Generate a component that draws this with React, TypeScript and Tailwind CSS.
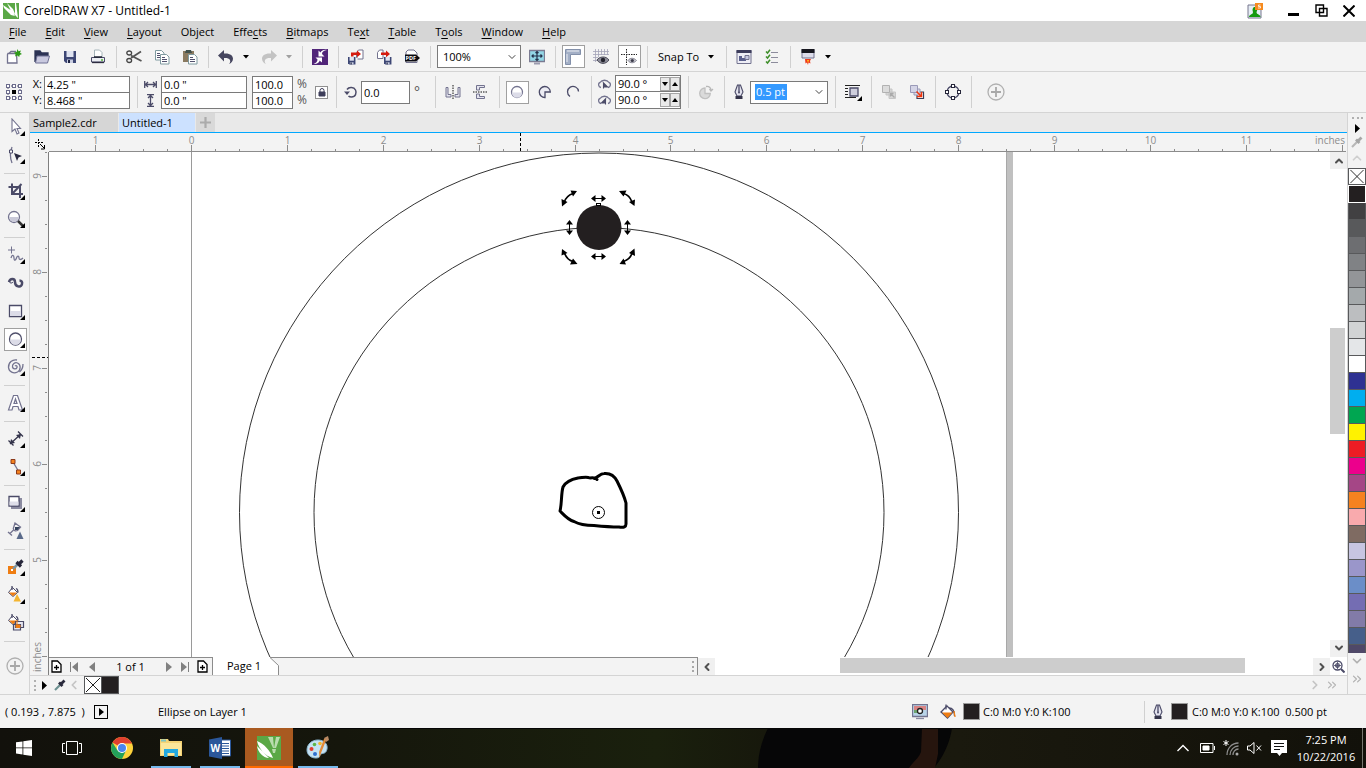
import React from 'react';
import { ChevronDown, ChevronLeft, ChevronRight, ChevronUp, ChevronsRight } from 'lucide-react';
import { clsx } from 'clsx';

type IconProps = { children: React.ReactNode; size?: string; box?: string };

const INK = '#4b4b68';
const SOFT = '#73738f';

const Icon = ({ children, size = 'w-4 h-4', box = '0 0 16 16' }: IconProps) => (
  <svg viewBox={box} className={clsx(size, 'shrink-0')} fill="none" stroke={INK} strokeWidth="1.3" aria-hidden="true">
    {children}
  </svg>
);

const Tool = ({ label, active, children }: { label: string; active?: boolean; children: React.ReactNode }) => (
  <div className="w-7 h-7 shrink-0 flex items-center justify-center">
    <button
      aria-label={label}
      className={clsx('w-[23px] h-[23px] flex items-center justify-center', active && 'bg-white border border-[#a0a0a0]')}
    >
      {children}
    </button>
  </div>
);

const Sep = ({ tall }: { tall?: boolean }) => (
  <div className={clsx('w-2 shrink-0 flex justify-center', tall ? 'h-8' : 'h-[22px]')}>
    <div className="w-px h-full bg-[#d0d0d0]" />
  </div>
);

const Caret = ({ label, muted }: { label: string; muted?: boolean }) => (
  <button aria-label={label} className="w-[15px] h-6 shrink-0 flex items-center pl-[3px]">
    <svg viewBox="0 0 6 4" className="w-[6px] h-1" fill={muted ? '#a0a0a0' : '#000'}><path d="M0 0h6L3 3.6z" /></svg>
  </button>
);

/* ---------- standard toolbar icons ---------- */

const Disk = ({ x = 0, y = 0, s = 1 }) => (
  <g transform={`translate(${x} ${y}) scale(${s})`} stroke="none">
    <path d="M0 0h12v12H2l-2-2z" fill="#3c4674" />
    <path d="M2.5 0h7v6h-7z" fill="#dfe3f0" />
    <path d="M3 8.5h6V12H3z" fill="#c9cde0" />
    <path d="M4 9h2v3H4z" fill="#1f2544" />
  </g>
);

const Sheet = ({ x, y }: { x: number; y: number }) => (
  <g transform={`translate(${x} ${y})`} strokeWidth="1">
    <path d="M.5.5h6l2.5 2.5v7H.5z" fill="#fff" stroke="#7f9aa0" />
    <path d="M2 3.5h3M2 5.5h5M2 7.5h5" stroke="#52526e" />
  </g>
);

const FileIcons = () => (
  <>
    <Tool label="New">
      <Icon><path d="M2 4.5h8.5l.5 9.5H1.500V5.500z" fill="#fff" stroke={SOFT} /><path d="M3 4.500L5 2.500h5" stroke={SOFT} /><path d="M11.500 0l1 2.300L15 1.500l-1 2.300 2 1.200-2.300 1-.5 2-1.700-1.600L9.200 7.500l.3-2.500L8 3.500l2.600-.5z" fill="#2f9a1a" stroke="none" /></Icon>
    </Tool>
    <Tool label="Open">
      <Icon><path d="M1 13V2h5l1.500 2H14v3" fill="#2c3354" stroke="#2c3354" /><path d="M3 7h12.500l-2 7H1.500z" fill="#c9c9df" stroke="#6f7094" strokeWidth="1" /></Icon>
    </Tool>
    <Tool label="Save"><Icon><Disk x={2} y={2} /></Icon></Tool>
    <Tool label="Print">
      <Icon><path d="M4.500 8V1h5L12 3.500V8" fill="#fff" stroke="#a6b5ba" strokeWidth="1" /><path d="M1.500 8.500h13V13h-13z" fill="#eceef3" stroke={INK} strokeWidth="1" /><path d="M2 13.500h12" stroke="#2c2c40" /><path d="M4 8h8" stroke="#1f2433" strokeWidth="1.500" /><path d="M11 11h2" stroke="#55b53a" /></Icon>
    </Tool>
    <Sep />
    <Tool label="Cut">
      <Icon><path d="M5 9L15 2.500M5 6.500L15.500 12" stroke="#555" strokeWidth="1.800" /><ellipse cx="3.200" cy="4" rx="2.400" ry="2" stroke="#444" /><ellipse cx="3.200" cy="11.500" rx="2.400" ry="2" stroke="#444" /></Icon>
    </Tool>
    <Tool label="Copy"><Icon><Sheet x={1} y={1} /><Sheet x={6} y={5} /></Icon></Tool>
    <Tool label="Paste">
      <Icon><path d="M1 2h11v11H1z" fill="#8a7a60" stroke="none" /><path d="M4 1h5l1 3H3z" fill="#40514d" stroke="none" /><Sheet x={6} y={5} /></Icon>
    </Tool>
    <Sep />
    <Tool label="Undo">
      <Icon><path d="M0 6.500L6 1v3.500c6-.5 9 2 9 5.200 0 2.500-1.800 4.300-4 5.300 1.300-1.500 1.600-3 .8-4.300-.9-1.500-3-1.900-5.800-1.700v3.500z" fill="#46465f" stroke="none" /></Icon>
    </Tool>
    <Caret label="Undo history" />
    <Tool label="Redo">
      <Icon><path d="M16 6.500L10 1v3.500C4 4 1 6.500 1 9.700c0 2.500 1.800 4.300 4 5.300-1.300-1.500-1.600-3-.8-4.300.9-1.500 3-1.900 5.800-1.700v3.500z" fill="#c3c3c3" stroke="none" /></Icon>
    </Tool>
    <Caret label="Redo history" muted />
    <Sep />
    <Tool label="Search content">
      <Icon>
        <path d="M0 0h16v16H0z" fill="#512579" stroke="none" />
        <path d="M15 1c-3.500.5-5 2-5 4l2.500 2.500h-6v-6l2 2C9.500 1.500 12 .5 15 1zM1.500 15C6 15 7.500 13 7.500 11.500L10 13.500V8.500H3.500l2 2c0 2-1.500 3.500-4 4.500z" fill="#fff" stroke="none" />
      </Icon>
    </Tool>
    <Sep />
    <Tool label="Import">
      <Icon><Disk x={0} y={8} s={0.62} /><path d="M9.500 8.500h-1V3.500l2-2.500H15v9H9.500" fill="#fff" stroke={SOFT} strokeWidth="1" /><path d="M3 3.500h6V1.500L13 5 9 8.200V6H5.500v1.500H3z" fill="#d51b10" stroke="none" /></Icon>
    </Tool>
    <Tool label="Export">
      <Icon><Disk x={8} y={8} s={0.62} /><path d="M1.500 9.500v-6l2-2.500H7v8.500z" fill="#fff" stroke={SOFT} strokeWidth="1" /><path d="M5 3.500h5V1.500L14 5l-4 3.200V6H5z" fill="#d51b10" stroke="none" /></Icon>
    </Tool>
    <Tool label="Publish to PDF">
      <Icon><path d="M2 13.500V3l2-2h6l3 3v9.500z" fill="#fff" stroke={SOFT} strokeWidth="1" /><path d="M1 5.500h11L16 9l-4 3.500H1z" fill="#0a0a12" stroke="none" /><text x="1.500" y="11.200" fontSize="5.500" fontWeight="700" fill="#fff" stroke="none">PDF</text></Icon>
    </Tool>
    <Sep />
  </>
);

const StandardBar = () => (
  <div className="h-[30px] shrink-0 flex items-center border-b border-[#d4d4d4]">
    <FileIcons />
    <div className="relative ml-[3px] mr-[2px] w-[84px] h-[23px] shrink-0">
      <select aria-label="Zoom level" className="appearance-none w-full h-full bg-white border border-[#7a7a7a] pl-[5px] rounded-none">
        <option>100%</option>
      </select>
      <ChevronDown className="absolute right-[3px] top-[6px] w-3 h-3 text-[#444] pointer-events-none" />
    </div>
    <Tool label="Full-screen preview">
      <Icon><path d="M.5 1.500h15v11H.5z" fill="#92d6e6" stroke="#7b7b92" /><path d="M5 14.500h6" stroke="#9a9aae" strokeWidth="2" /><path d="M8 2.500v9M3 7h10M6.500 4L8 2.500 9.500 4M6.500 10L8 11.500 9.500 10M4.500 5.500L3 7l1.500 1.500M11.500 5.500L13 7l-1.500 1.500" stroke="#24304a" strokeWidth="1.200" /></Icon>
    </Tool>
    <Sep />
    <Tool label="Show rulers" active>
      <Icon><path d="M.5.5h15v5h-10v10h-5z" fill="#a3afc6" stroke="#8390aa" strokeWidth="1" /><path d="M3 1v2M5 1v2M7 1v2M9 1v2M11 1v2M13 1v2M1 6h2M1 8h2M1 10h2M1 12h2" stroke="#fff" strokeWidth=".8" /></Icon>
    </Tool>
    <Tool label="Show grid">
      <Icon><path d="M2.500 0v13M5.500 0v8M8.500 0v6M11.500 0v6M14.500 0v6M0 2.500h16M0 5.500h16M0 8.500h5M0 11.500h5" stroke="#a3a3b8" strokeWidth=".8" /><path d="M4 11c2-3.500 9-4.500 12 0-3 4.500-9 4.500-12 0z" fill="#8e8e9a" stroke="#4a4a58" strokeWidth="1" /><circle cx="10" cy="11" r="2.200" fill="#23232e" stroke="none" /></Icon>
    </Tool>
    <Tool label="Show guidelines" active>
      <Icon><path d="M5.500 0v16M0 5.500h16" stroke="#222" strokeWidth="1" strokeDasharray="1.500 1" /><path d="M7 11.500c2-3 6-3 8.500 0-2.500 3-6.500 3-8.500 0z" fill="#c4c4cc" stroke="#8b8b98" strokeWidth="1" /><circle cx="11.300" cy="11.500" r="1.600" fill="#3a3a48" stroke="none" /></Icon>
    </Tool>
    <Sep />
    <button className="w-[71px] h-6 shrink-0 flex items-center gap-[9px] pl-[7px] whitespace-nowrap">
      Snap To
      <svg viewBox="0 0 6 4" className="w-[6px] h-1" fill="#000"><path d="M0 0h6L3 3.600z" /></svg>
    </button>
    <Sep />
    <Tool label="Options">
      <Icon><path d="M1 1.500h14v13H1z" fill="#eeeef6" stroke={SOFT} strokeWidth="1" /><path d="M.5 1h15v3H.5z" fill="#3d3d5c" stroke="none" /><path d="M3 7h3v5H3zM6 9h4v3H6z" fill="#5b608d" stroke="none" /><path d="M9 6.500h4v4H9z" fill="#c7c9e2" stroke={SOFT} strokeWidth="1" /></Icon>
    </Tool>
    <Tool label="Customize">
      <Icon><path d="M7 3.500h7M7 8.500h7M7 13.500h7" stroke="#8c8c9c" strokeWidth="1" /><path d="M2 2.500l1.500 1.500L6 .8M2 7.500L3.500 9 6 5.800M2 12.500L3.500 14 6 10.800" stroke="#3f8f2a" strokeWidth="1.500" /></Icon>
    </Tool>
    <Sep />
    <Tool label="Application launcher">
      <Icon><path d="M2 .5h12v8.500H2z" fill="#dcdcea" stroke={SOFT} strokeWidth="1" /><path d="M1.500 0h13v4h-13z" fill="#17171f" stroke="none" /><path d="M5 10h6l-1 2 .5 2.500-2-1L8 16l-1-2.500-1.500 1z" fill="#f0381a" stroke="none" /><path d="M7 11h2l-1 3z" fill="#ffc21a" stroke="none" /></Icon>
    </Tool>
    <Caret label="Launcher menu" />
  </div>
);

/* ---------- property bar ---------- */

type FieldProps = { id: string; value: string; label: string; width: string; second?: boolean };

const Field = ({ id, value, label, width, second }: FieldProps) => (
  <input
    id={id}
    aria-label={label}
    defaultValue={value}
    className={clsx('h-[17px] bg-white border border-[#7a7a7a] px-[2px] rounded-none', width, second && '-mt-px')}
  />
);

const Spin = ({ id, label }: { id: string; label: string }) => (
  <div className="flex items-center h-4 bg-white">
    <input id={id} aria-label={label} defaultValue="90.0 °" className="w-11 px-[2px] bg-transparent" />
    {['Decrease', 'Increase'].map((name, i) => (
      <button key={name} aria-label={`${name} ${label}`} className="w-[10px] h-[14px] bg-[#e9e9e9] border border-[#a6a6a6] flex items-center justify-center">
        <svg viewBox="0 0 6 4" className={clsx('w-[6px] h-1 shrink-0', i === 1 && 'rotate-180')}><path d="M0 0h6L3 4z" /></svg>
      </button>
    ))}
  </div>
);

const PlusCircle = () => (
  <Icon size="w-[18px] h-[18px]" box="0 0 18 18"><circle cx="9" cy="9" r="8" stroke="#b0b0b0" /><path d="M9 4v10M4 9h10" stroke="#a8a8a8" strokeWidth="1.800" /></Icon>
);

const Nib = () => (
  <Icon><path d="M6.500 1h3l2.500 7-2 4H6L4 8z" fill="#e3e3ee" stroke={INK} strokeWidth="1.100" /><path d="M8 1v7" stroke={INK} /><circle cx="8" cy="8.500" r="1" fill={INK} stroke="none" /><path d="M4.500 12h7v3h-7z" fill="#34344a" stroke="none" /></Icon>
);

const PropertyBar = () => (
  <div className="h-[41px] shrink-0 flex items-center border-b border-[#d4d4d4]">
    <Tool label="Object origin">
      <Icon>
        <path d="M2 2h12v12H2z" stroke="#55556e" strokeWidth="1" strokeDasharray="2 1" />
        {[2, 8, 14].map((x) => [2, 8, 14].map((y) => (
          <rect key={`${x}-${y}`} x={x - 1.5} y={y - 1.5} width="3" height="3" fill={x === 8 && y === 8 ? '#000' : '#fff'} stroke={x === 8 && y === 8 ? '#000' : '#6b6b8c'} strokeWidth="1" />
        )))}
      </Icon>
    </Tool>
    <div className="w-4 flex flex-col items-end pr-[2px] leading-4">
      <label htmlFor="pos-x">X:</label>
      <label htmlFor="pos-y">Y:</label>
    </div>
    <div className="flex flex-col mr-[3px]">
      <Field id="pos-x" label="X position" value={'4.25 "'} width="w-[86px]" />
      <Field id="pos-y" label="Y position" value={'8.468 "'} width="w-[86px]" second />
    </div>
    <Sep tall />
    <div className="w-5 flex flex-col items-center gap-[3px] pr-[2px]">
      <Icon size="w-[13px] h-[13px]" box="0 0 13 13"><path d="M.7 3v7M12.300 3v7M1.500 6.500h10M4 4L1.500 6.500 4 9M9 4l2.500 2.500L9 9" /></Icon>
      <Icon size="w-[13px] h-[13px]" box="0 0 13 13"><path d="M3 .7h7M3 12.300h7M6.500 1.500v10M4 4l2.500-2.500L9 4M4 9l2.500 2.500L9 9" /></Icon>
    </div>
    <div className="flex flex-col">
      <Field id="size-w" label="Object width" value={'0.0 "'} width="w-[86px]" />
      <Field id="size-h" label="Object height" value={'0.0 "'} width="w-[86px]" second />
    </div>
    <div className="flex flex-col ml-[5px]">
      <Field id="scale-x" label="Horizontal scale" value="100.0" width="w-[41px]" />
      <Field id="scale-y" label="Vertical scale" value="100.0" width="w-[41px]" second />
    </div>
    <div className="w-[18px] pl-1 text-xs leading-4 text-[#555]">
      <div>%</div>
      <div>%</div>
    </div>
    <button aria-label="Lock ratio" className="mx-1 w-[13px] h-[13px] bg-white border border-[#909090] flex items-center justify-center">
      <svg viewBox="0 0 8 9" className="w-2 h-[9px]" fill="none" stroke="#3e3e5a"><path d="M2 4V2.500a2 2 0 014 0V4" /><path d="M1 4h6v4H1z" fill="#3e3e5a" /></svg>
    </button>
    <Sep tall />
    <label htmlFor="angle" className="w-[21px] flex justify-center">
      <Icon size="w-[14px] h-[14px]" box="0 0 14 14"><path d="M3 4.500c2-3 7-2.500 8.500.5s0 7-4 7c-1.500 0-2.500-.5-3-1" strokeWidth="1.500" /><path d="M0 6.500h6L3 10z" fill={INK} stroke="none" /></Icon>
    </label>
    <input id="angle" defaultValue="0.0" className="w-[49px] h-[23px] px-[2px] bg-white border border-[#7a7a7a]" />
    <span className="w-[21px] pl-1 text-sm text-[#555]">°</span>
    <Sep tall />
    <Tool label="Mirror horizontally">
      <Icon><path d="M1 3.500h2v7h3v2.500H1zM15 3.500h-2v7h-3v2.500h5z" stroke={SOFT} fill="#e4e4ee" strokeWidth="1" /><path d="M8 1v14" stroke="#111" strokeWidth="1" strokeDasharray="1.500 1" /></Icon>
    </Tool>
    <Tool label="Mirror vertically">
      <Icon><path d="M3.500 1.500h8v2h-5v2.500h-3zM3.500 14.500h8v-2h-5V10h-3z" stroke={SOFT} fill="#e4e4ee" strokeWidth="1" /><path d="M0 8h15" stroke="#111" strokeWidth="1" strokeDasharray="1.500 1" /></Icon>
    </Tool>
    <Sep tall />
    <Tool label="Ellipse" active><Icon><circle cx="8" cy="8" r="5.500" fill="#fff" stroke={SOFT} /><path d="M2.800 8.500h10.400a5.200 5.200 0 01-10.400 0z" fill="#dcdce8" stroke="none" /></Icon></Tool>
    <Tool label="Pie"><Icon><path d="M8 8h5.300A5.500 5.500 0 108 13.500z" fill="#ececf3" stroke={INK} /></Icon></Tool>
    <Tool label="Arc"><Icon><path d="M5 12.500a5.500 5.500 0 118.500-5" stroke={INK} /></Icon></Tool>
    <Sep tall />
    <div className="w-5 flex flex-col items-center gap-[3px] pr-px">
      <Icon size="w-[13px] h-[13px]" box="0 0 13 13"><path d="M3 9.500C0 9 0 5 2 4.500c2-3 7-3 9 0 2 .5 2 4.500-1 5" stroke={SOFT} /><path d="M5.500 4.500v6M5.500 5l4 4h-3z" strokeWidth="1.100" fill={INK} /></Icon>
      <Icon size="w-[13px] h-[13px]" box="0 0 13 13"><path d="M3 9.500C0 9 0 5 2 4.500c2-3 7-3 9 0 2 .5 2 4.500-1 5" stroke={SOFT} /><path d="M7.500 4.500v6M7.500 5l-4 4h3z" strokeWidth="1.100" fill={INK} /></Icon>
    </div>
    <div className="flex flex-col border border-[#7a7a7a] divide-y divide-[#7a7a7a] mr-[3px]">
      <Spin id="start-angle" label="Starting angle" />
      <Spin id="end-angle" label="Ending angle" />
    </div>
    <Sep tall />
    <Tool label="Change direction"><Icon><path d="M7 4a5.300 5.300 0 105.300 5.500H7z" fill="#dadada" stroke="#c0c0c0" /><path d="M8 2.500c3-.5 5 1 5 4M11.500 5l1.500 2 2-2" stroke="#b8b8b8" /></Icon></Tool>
    <Sep tall />
    <div className="w-5 flex justify-center pl-px"><Nib /></div>
    <div className="ml-[2px] mr-[3px] w-[78px] h-[23px] bg-white border border-[#7a7a7a] flex items-center justify-between pl-1">
      <input aria-label="Outline width" defaultValue="0.5 pt" className="w-8 h-4 bg-[#3399ff] text-white pl-px" />
      <button aria-label="Outline width list" className="pr-[2px]"><ChevronDown className="w-3 h-3 text-[#444]" /></button>
    </div>
    <Sep tall />
    <Tool label="Wrap text">
      <Icon size="w-[18px] h-[18px]" box="0 0 18 18"><path d="M1 2.500h15M1 5.500h3M1 8.500h3M1 11.500h3M1 14.500h11" stroke="#222" strokeWidth="1" /><path d="M6 5h8v8H6z" fill="#cfcfdd" stroke={INK} /><path d="M18 13v5h-5z" fill="#000" stroke="none" /></Icon>
    </Tool>
    <Sep tall />
    <Tool label="To front"><Icon><path d="M8 8h6.500v6.500H8zM5 5h6v6H5z" fill="#d6d6d6" stroke="#c6c6c6" strokeWidth="1" /><path d="M1.500 1.500h7v7h-7z" fill="#dcdcdc" stroke="#b2b2b2" strokeWidth="1" /><path d="M9.500 12.500v-3h3M9.500 9.500l4 4" stroke="#aaa" /></Icon></Tool>
    <Tool label="To back"><Icon><path d="M8 8h6.500v6.500H8z" fill="#fff" stroke="#3b3b55" strokeWidth="1.200" /><path d="M5 5h6v6H5z" fill="#dcdcea" stroke="#9a9ab8" strokeWidth="1" /><path d="M1.500 1.500h7v7h-7z" fill="#d4d4e6" stroke="#9a9ab8" strokeWidth="1" /><path d="M7.500 7.500l4.500 4.500M12.500 8v4.500H8" stroke="#f0340c" strokeWidth="1.500" /></Icon></Tool>
    <Sep tall />
    <Tool label="Convert to curves">
      <Icon><circle cx="8" cy="8" r="6" stroke={INK} />{[[8, 2], [14, 8], [8, 14], [2, 8]].map(([x, y]) => <rect key={`${x}${y}`} x={x - 1.5} y={y - 1.5} width="3" height="3" fill="#fff" stroke="#26263a" strokeWidth="1" />)}</Icon>
    </Tool>
    <Sep tall />
    <button aria-label="Quick customize" className="ml-3"><PlusCircle /></button>
  </div>
);

/* ---------- toolbox ---------- */

const Flyout = () => <path d="M18 13v5h-5z" fill="#000" stroke="none" />;

const HSep = () => <div className="h-2 shrink-0 flex items-center px-1"><div className="h-px w-full bg-[#d0d0d0]" /></div>;

const ToolBtn = ({ label, active, fly = true, children }: { label: string; active?: boolean; fly?: boolean; children: React.ReactNode }) => (
  <div className="h-7 shrink-0 flex items-center pl-[4px]">
    <button aria-label={label} className={clsx('w-[23px] h-[23px] flex items-center justify-center', active && 'bg-white border border-[#a0a0a0]')}>
      <svg viewBox="0 0 18 18" className="w-[18px] h-[18px] shrink-0" fill="none" stroke={INK} strokeWidth="1.300">
        {children}
        {fly && <Flyout />}
      </svg>
    </button>
  </div>
);

const Bucket = () => (
  <>
    <path d="M5.500 1.500l5 5-4.500 4-4.500-4z" fill="#fff" stroke={INK} strokeWidth="1" />
    <path d="M2 6.500h8l-4 3.800z" fill="#ef7d12" stroke="none" />
    <path d="M5 0v4M9 2.500c1.500.5 2 2 2 4" stroke={INK} strokeWidth="1.300" />
  </>
);

const Toolbox = () => (
  <nav aria-label="Toolbox" className="w-[30px] shrink-0 border-r border-[#d4d4d4] flex flex-col">
    <ToolBtn label="Pick"><path d="M5 1v12.500l3-2.500 2 5 2-1-2-4.500h3.500z" fill="#fff" stroke={SOFT} strokeWidth="1.100" /></ToolBtn>
    <ToolBtn label="Shape"><path d="M5 1C3 6 3 12 5 17" stroke={SOFT} /><path d="M2.500 4h3v3h-3z" fill="#fff" strokeWidth="1" /><path d="M7 7l8 3-3.500 1.500L10 15z" fill="#2a2a40" stroke="none" /></ToolBtn>
    <HSep />
    <ToolBtn label="Crop"><path d="M5 1.500V12h11M1.500 5H13v11M14.500 2L5 12" strokeWidth="2" /></ToolBtn>
    <ToolBtn label="Zoom"><circle cx="7" cy="7" r="5.500" fill="#fff" stroke={SOFT} /><path d="M2.200 7h9.600a4.800 4.800 0 01-9.600 0z" fill="#c9c9d8" stroke="none" /><path d="M11 11l5 5" strokeWidth="2.500" stroke="#333" /></ToolBtn>
    <HSep />
    <ToolBtn label="Freehand"><path d="M4.500.5v7M1 4h7" strokeWidth="1" stroke={SOFT} /><path d="M4 12c1-4 3-3 3 0s1.500 3 2.500 0 2.500-2 2.500 0 2 2 4 0" stroke={SOFT} /></ToolBtn>
    <ToolBtn label="Artistic media" fly={false}><path d="M2 8c1-4 6-4 6 0 0 5 6 6 7 2 .5-2-.5-3.500-2.500-3.500" strokeWidth="2.500" /><path d="M2 7.500c1 2 3 2 4 .5" strokeWidth="1" /></ToolBtn>
    <ToolBtn label="Rectangle"><path d="M2.500 3.500h12v11h-12z" fill="#fff" /><path d="M3 9h11v5H3z" fill="#dcdce8" stroke="none" /></ToolBtn>
    <ToolBtn label="Ellipse" active><circle cx="8.500" cy="9" r="6" fill="#fff" stroke="#50506c" /><path d="M3 9.500h11a5.500 5.500 0 01-11 0z" fill="#dcdce8" stroke="none" /></ToolBtn>
    <ToolBtn label="Spiral"><path d="M8 8c1-1 2.500 0 2 1.500-.6 2-4 2-4.500-.5C5 6 8 4 10.500 5c3.500 1.500 3.500 7 0 9-4 2-8.500 0-9-4.500C1.200 4.500 5.500 1 10 2M16 6c0 4-1 6-3.500 8" stroke={SOFT} /></ToolBtn>
    <HSep />
    <ToolBtn label="Text"><path d="M1.500 16L6.500 1.500h4l5 14.500h-3.500l-1-3.500H6L5 16zM7 9.500h3L8.500 5z" fill="#fff" stroke={SOFT} strokeWidth="1.200" /></ToolBtn>
    <HSep />
    <ToolBtn label="Dimension"><path d="M3 14L14 4M1.500 10.500l5 5M11 1.500l5 5" stroke="#33334a" /><path d="M3 14l1-5 4 4zM14 4l-5 1 4 4z" fill="#33334a" stroke="none" /></ToolBtn>
    <ToolBtn label="Connector"><path d="M6 4l6 10" stroke={SOFT} /><path d="M4 1.500h4v4H4zM9.500 12h4v4h-4z" fill="#f5821f" stroke="#8c3b1a" strokeWidth="1" /></ToolBtn>
    <HSep />
    <ToolBtn label="Drop shadow"><path d="M4 4h11v11H4z" fill="#8b8ba0" stroke="none" /><path d="M2 2.500h10v9.500H2z" fill="#fff" /><path d="M2.500 7.500h9v4h-9z" fill="#dedee9" stroke="none" /></ToolBtn>
    <ToolBtn label="Transparency" fly={false}><path d="M8 1l5.500 4-3 3.500c-2 1-4 0-4.200-2zM6.500 8L3 11.500M1 10l4 3.500" stroke={SOFT} /><path d="M8 5h5l-2.500 3H8z" fill="#33415c" stroke="none" /><path d="M13 9.500l3.500 7.500h-7z" fill="#5a6a8a" stroke="none" /></ToolBtn>
    <HSep />
    <ToolBtn label="Eyedropper"><path d="M1 8h8v8H1z" fill="#ef7d12" stroke="none" /><path d="M4 11h2v2H4z" fill="#fff" stroke="none" /><path d="M6 11l6-6" stroke="#7e94a0" strokeWidth="2.500" /><path d="M9.500 4l4.500 4.500M12 6l3.500-3.500" stroke="#26263a" strokeWidth="3.200" /></ToolBtn>
    <ToolBtn label="Interactive fill"><Bucket /><path d="M10 8l4 7.500H6.500z" fill="#f4b531" stroke="none" /></ToolBtn>
    <ToolBtn label="Smart fill" fly={false}><Bucket /><path d="M8.500 7.500h8v6h-8zM6.500 10.500h7v5.500h-7z" fill="#e8e8f2" strokeWidth="1.200" /><path d="M9 11h4v2.500H9zM10 6v5" fill="#ef7d12" stroke="#ef7d12" strokeWidth="1" /></ToolBtn>
    <HSep />
    <button aria-label="Customize toolbox" className="mt-3 flex justify-center pl-px"><PlusCircle /></button>
  </nav>
);

/* ---------- document window ---------- */

const INCH = 96;
const QUARTER = 24;

const HRuler = () => {
  const origin = 142.5;
  const ticks = Array.from({ length: 80 }, (_, i) => i - 5);
  return (
    <svg className="flex-1 min-w-0 h-[18px] text-[10px]" fill="#8c8c8c">
      {ticks.map((t) => (
        <rect key={t} x={origin - 0.5 + t * QUARTER - Math.round(t / 40)} y={t % 4 ? 16 : 12} width="1" height={t % 4 ? 2 : 6} />
      ))}
      {Array.from({ length: 13 }, (_, i) => i - 1).map((n) => (
        n < 12 && <text key={n} x={origin + n * INCH - Math.round(n / 10)} y="11" textAnchor="middle">{Math.abs(n)}</text>
      ))}
      <text x="1266" y="11">inches</text>
      <path d="M471.500 0v18" stroke="#000" strokeDasharray="3 2" />
    </svg>
  );
};

const VRuler = () => (
  <svg className="w-[19px] shrink-0 text-[10px]" fill="#8c8c8c">
    {Array.from({ length: 22 }, (_, i) => i).map((i) => (
      <rect key={i} x={i % 4 === 1 ? 12 : 15} y={i * QUARTER} width={i % 4 === 1 ? 5 : 2} height="1" />
    ))}
    {[9, 8, 7, 6, 5].map((n, i) => (
      <text key={n} transform={`translate(11 ${24 + i * INCH}) rotate(-90)`} textAnchor="middle">{n}</text>
    ))}
    <text transform="translate(11 520) rotate(-90)">inches</text>
    <path d="M2 205.500h16" stroke="#000" strokeDasharray="3 2" />
    <path d="M18.500 0v523" stroke="#7f7f7f" />
  </svg>
);

// double headed arrow lying on the x axis
const Stretch = ({ x, y, turn = 0 }: { x: number; y: number; turn?: number }) => (
  <path transform={`translate(${x} ${y}) rotate(${turn})`} d="M-7.500 0l4.500-3.500v3h6v-3L7.500 0 3 3.500v-3h-6v3z" />
);

const Rotate = ({ x, y, turn }: { x: number; y: number; turn: number }) => (
  <g transform={`translate(${x} ${y}) rotate(${turn})`}>
    <path d="M-4.500 4Q-3-2 4-4.500" fill="none" stroke="#000" strokeWidth="1.700" />
    <path d="M-7.500 1l6 3-5.500 4.500zM1.500-7.500l6.500.5-4 5.500z" />
  </g>
);

const Drawing = () => (
  <svg className="flex-1 min-w-0 h-full bg-white" role="img" aria-label="Drawing page">
    <path d="M142.500 0v505" stroke="#9a9a9a" />
    <rect x="957" width="7" height="505" fill="#c0c0c0" />
    <path d="M957.500 0v505" stroke="#a8a8a8" />
    <g fill="none" stroke="#333" strokeWidth="1">
      <circle cx="550" cy="360.500" r="359.500" />
      <circle cx="550" cy="360.500" r="285" />
    </g>
    <circle cx="550" cy="75.500" r="22.500" fill="#231f20" />
    <rect x="547.500" y="51.500" width="4" height="2" fill="#fff" stroke="#000" />
    <Stretch x={549.5} y={46.5} />
    <Stretch x={549.5} y={104.5} />
    <Stretch x={520.5} y={75.5} turn={90} />
    <Stretch x={578.5} y={75.5} turn={90} />
    <Rotate x={520} y={46} turn={0} />
    <Rotate x={578.5} y={46} turn={90} />
    <Rotate x={578.5} y={105} turn={180} />
    <Rotate x={520} y={105} turn={270} />
    <path
      d="M548 327.500c-2-2-5-2-7-1.500-4-2-8 0-12 0-5 1-12 3-15 9-2 7-1 16-3 24 4 4 8 9 14 10.500 7 4 14 4 20 4 10 1 18 1.500 25 1.500 5 1 7-.5 7-3v-21c-2-8-6-16-9-22-3-6-8-8-13-7.500-4 0-6 4-10 5"
      fill="none" stroke="#000" strokeWidth="3" strokeLinecap="round" strokeLinejoin="round"
    />
    <circle cx="549.500" cy="360.500" r="6" fill="none" stroke="#000" />
    <rect x="548" y="359" width="3" height="3" />
  </svg>
);

const ScrollBtn = ({ label, children }: { label: string; children: React.ReactNode }) => (
  <button aria-label={label} className="w-[17px] h-[17px] shrink-0 bg-[#f0f0f0] flex items-center justify-center text-[#505050]">{children}</button>
);

const AddPage = () => (
  <Icon size="w-[11px] h-[13px]" box="0 0 11 13"><path d="M1 1h5.500L10 4.500V12H1z" fill="#fff" stroke="#000" /><path d="M5.500 5v5M3 7.500h5" stroke="#000" /></Icon>
);

const PageBar = () => (
  <div className="flex h-[18px] bg-white">
    <div className="w-1/2 flex border-r border-[#8c8c8c]">
      <div className="w-[164px] shrink-0 bg-[#f3f3f3] border-t border-r border-[#8c8c8c] flex items-center text-[#808080]">
        <button aria-label="Add page before" className="ml-[2px]"><AddPage /></button>
        <button aria-label="First page" className="ml-2"><svg viewBox="0 0 8 10" className="w-2 h-[10px]" fill="#808080"><path d="M0 0h1v10H0zM8 0v10L2 5z" /></svg></button>
        <button aria-label="Previous page" className="ml-[11px]"><svg viewBox="0 0 6 10" className="w-[6px] h-[10px]" fill="#808080"><path d="M6 0v10L0 5z" /></svg></button>
        <span className="flex-1 text-center text-black whitespace-nowrap">1 of 1</span>
        <button aria-label="Next page"><svg viewBox="0 0 6 10" className="w-[6px] h-[10px]" fill="#808080"><path d="M0 0v10l6-5z" /></svg></button>
        <button aria-label="Last page" className="ml-[9px]"><svg viewBox="0 0 8 10" className="w-2 h-[10px]" fill="#808080"><path d="M7 0h1v10H7zM0 0v10l6-5z" /></svg></button>
        <button aria-label="Add page after" className="ml-2 mr-[4px]"><AddPage /></button>
      </div>
      <button className="shrink-0 bg-white pl-[14px] pr-[2px] whitespace-nowrap leading-4">Page 1</button>
      <svg viewBox="0 0 16 18" className="w-4 h-[18px] shrink-0 bg-[#f3f3f3]"><path d="M0 0h7l8 8v10H0z" fill="#fff" /><path d="M7 .5l8.500 8V18M7 .5h9" fill="none" stroke="#8c8c8c" /></svg>
      <div className="flex-1 bg-[#f3f3f3] border-t border-[#8c8c8c] flex items-center justify-end pr-[3px]">
        <div className="h-[11px] border-l-2 border-dotted border-[#a8a8a8]" />
      </div>
    </div>
    <div className="flex-1 flex pt-px">
      <ScrollBtn label="Scroll left"><ChevronLeft className="w-3 h-3" strokeWidth={4} /></ScrollBtn>
      <div className="flex-[125]" />
      <div className="flex-[403] h-[15px] bg-[#cdcdcd]" />
      <div className="flex-[68]" />
      <ScrollBtn label="Scroll right"><ChevronRight className="w-3 h-3" strokeWidth={4} /></ScrollBtn>
      <button aria-label="Navigator" className="w-[17px] flex items-center justify-center">
        <Icon size="w-[13px] h-[13px]" box="0 0 13 13"><circle cx="5.500" cy="5.500" r="4.500" fill="#fff" /><circle cx="5.500" cy="5.500" r="1.800" /><path d="M5.500 2v7M2 5.500h7" strokeWidth=".8" /><path d="M9 9l3.500 3.500" strokeWidth="2" /></Icon>
      </button>
    </div>
  </div>
);

const DocumentPalette = () => (
  <div className="h-[19px] shrink-0 border-t border-[#d4d4d4] flex items-center text-[#b5b5b5]">
    <div className="ml-1 h-[11px] border-l-2 border-dotted border-[#b0b0b0]" />
    <button aria-label="Palette menu" className="ml-[6px]"><svg viewBox="0 0 5 9" className="w-[5px] h-[9px]"><path d="M0 0v9l5-4.500z" /></svg></button>
    <button aria-label="Color eyedropper" className="ml-[7px]"><Dropper dark /></button>
    <ChevronLeft className="w-[14px] h-[14px] ml-px text-[#c4c4c4]" strokeWidth={3} />
    <NoColor className="ml-[3px] w-[18px] h-[18px]" />
    <button aria-label="Black" className="w-[17px] h-[18px] bg-[#231f20] border border-l-0 border-[#58595b]" />
    <ChevronRight className="ml-auto w-[14px] h-[14px] text-[#c4c4c4]" strokeWidth={3} />
    <ChevronsRight className="ml-[3px] mr-2 w-[14px] h-[14px]" />
  </div>
);

const Dropper = ({ dark }: { dark?: boolean }) => (
  <Icon size="w-3 h-3" box="0 0 12 12">
    <path d="M1 11l6-6" stroke={dark ? '#6c9090' : '#b8b8b8'} strokeWidth="2.200" />
    <path d="M5 3.500L8.500 7M7.500 4.500L10.500 1.500" stroke={dark ? '#2a2a3c' : '#a6a6a6'} strokeWidth="2.800" />
  </Icon>
);

const NoColor = ({ className }: { className: string }) => (
  <button aria-label="No color" className={clsx('shrink-0 bg-white border border-[#58595b]', className)}>
    <svg viewBox="0 0 16 16" className="w-full h-full" stroke="#222"><path d="M1 1l14 14M15 1L1 15" /></svg>
  </button>
);

const swatches = [
  'bg-[#414042]', 'bg-[#58595b]', 'bg-[#6d6e71]', 'bg-[#808285]', 'bg-[#939598]', 'bg-[#a4a9ab]', 'bg-[#bcbec0]',
  'bg-[#d1d3d4]', 'bg-[#e4e6e8]', 'bg-white', 'bg-[#2e3192]', 'bg-[#00aeef]', 'bg-[#00a651]', 'bg-[#fff200]',
  'bg-[#ed1c24]', 'bg-[#ec008c]', 'bg-[#a54686]', 'bg-[#f58220]', 'bg-[#f9aaad]', 'bg-[#7f6b62]', 'bg-[#c7c5e1]',
  'bg-[#9a96ca]', 'bg-[#6b8ec8]', 'bg-[#746db3]', 'bg-[#827ba8]', 'bg-[#465f8a]', 'bg-[#4f4868]',
];

const ColorPalette = () => (
  <aside aria-label="Color palette" className="w-[19px] shrink-0 border-l border-[#d4d4d4] flex flex-col items-stretch text-[#b0b0b0]">
    <div className="mx-auto mt-1 w-[11px] border-t-2 border-dotted border-[#b0b0b0]" />
    <button aria-label="Palette options" className="mx-auto mt-1 h-[10px]"><svg viewBox="0 0 5 9" className="w-[5px] h-[9px]"><path d="M0 0v9l5-4.500z" /></svg></button>
    <button aria-label="Sample color" className="mx-auto mt-[3px]"><Dropper /></button>
    <ChevronUp className="mx-auto mt-[3px] mb-[3px] w-[14px] h-[14px] shrink-0 text-[#cfcfcf]" strokeWidth={3} />
    <div className="flex-1 min-h-0 overflow-hidden flex flex-col bg-[#58595b]">
      <NoColor className="w-[18px] h-[17px]" />
      <button aria-label="Black" className="h-[18px] shrink-0 bg-[#231f20] border border-white" />
      {swatches.map((color) => (
        <button key={color} aria-label="Color swatch" className={clsx('h-[17px] shrink-0 border-b border-x border-[#58595b]', color)} />
      ))}
    </div>
    <ChevronDown className="mx-auto mt-px w-[14px] h-[14px] shrink-0" strokeWidth={3} />
    <ChevronsRight className="mx-auto mt-1 mb-2 w-[14px] h-[14px] shrink-0" />
  </aside>
);

const Workspace = () => (
  <main className="flex-1 min-w-0 flex flex-col">
    <div className="h-[19px] shrink-0 bg-[#e9e9e9] flex gap-px leading-[18px]">
      <button className="bg-[#d6d6d6] pl-[3px] w-[88px] text-left">Sample2.cdr</button>
      <button className="bg-[#cce1ff] pl-[3px] w-[76px] text-left">Untitled-1</button>
      <button aria-label="New document" className="bg-[#d9d9d9] w-[19px] flex items-center justify-center">
        <svg viewBox="0 0 10 10" className="w-[11px] h-[11px]" stroke="#ababab" strokeWidth="2"><path d="M5 0v10M0 5h10" /></svg>
      </button>
    </div>
    <div className="flex-1 min-h-0 flex flex-col border-t border-[#00a8ff]">
      <div className="flex shrink-0">
        <div className="w-[19px] h-[19px] shrink-0 flex items-end pl-[5px] pb-px">
          <svg viewBox="0 0 12 12" className="w-3 h-3" fill="none" stroke="#000"><path d="M3.500 0v8M0 3.500h8" strokeDasharray="2 1" /><path d="M5 5l4.500 4.500M9.500 6v4H6" /></svg>
        </div>
        <div className="flex-1 min-w-0 flex border-b border-[#8c8c8c] mr-px"><HRuler /></div>
      </div>
      <div className="flex-1 min-h-0 flex">
        <VRuler />
        <div className="flex-1 min-w-0 flex flex-col">
          <div className="flex-1 min-h-0 flex">
            <Drawing />
            <div className="w-[17px] shrink-0 bg-white flex flex-col">
              <ScrollBtn label="Scroll up"><ChevronUp className="w-3 h-3" strokeWidth={4} /></ScrollBtn>
              <div className="flex-[159]" />
              <div className="flex-[107] w-[15px] bg-[#cdcdcd]" />
              <div className="flex-[206]" />
              <ScrollBtn label="Scroll down"><ChevronDown className="w-3 h-3" strokeWidth={4} /></ScrollBtn>
            </div>
          </div>
          <PageBar />
        </div>
      </div>
    </div>
    <DocumentPalette />
  </main>
);

/* ---------- bars around the workspace ---------- */

const menus: [string, string, string][] = [
  ['', 'F', 'ile'], ['', 'E', 'dit'], ['', 'V', 'iew'], ['', 'L', 'ayout'], ['Ob', 'j', 'ect'], ['Effe', 'c', 'ts'],
  ['', 'B', 'itmaps'], ['Te', 'x', 't'], ['', 'T', 'able'], ['T', 'o', 'ols'], ['', 'W', 'indow'], ['', 'H', 'elp'],
];

const TitleBar = () => (
  <header className="h-[21px] shrink-0 bg-white flex items-center text-black">
    <svg viewBox="0 0 16 16" className="w-4 h-4 ml-[3px] mr-[5px]"><path d="M0 0h16v16H0z" fill="#5aa846" /><path d="M0 2l9 6 3 5-4-1L1 5zM4 0l6 6 2 5V0h1l2 15L8 8z" fill="#fff" /></svg>
    <h1 className="text-xs">CorelDRAW X7 - Untitled-1</h1>
    <div className="ml-auto flex items-center">
      <button aria-label="Account" className="mr-[25px]">
        <svg viewBox="0 0 16 16" className="w-4 h-4"><path d="M1 2h13v13H1z" fill="#e6edf5" stroke="#77778e" /><path d="M2 14c0-3 4-2 4-5-1-3 0-5 2-5s3 3 1.500 5c0 3 4 2 4 5z" fill="#159a10" /><path d="M8 0h8v7H8z" fill="#f68a1e" /><path d="M13.500 2h-2v1.500h2V5h-2.500" fill="none" stroke="#fff" strokeWidth=".8" /></svg>
      </button>
      <button aria-label="Minimize" className="mr-4 pt-2"><div className="w-[11px] h-[3px] bg-black" /></button>
      <button aria-label="Restore" className="mr-[15px]"><svg viewBox="0 0 13 13" className="w-[13px] h-[13px]" fill="#fff" stroke="#000" strokeWidth="1.400"><path d="M1 1h7.500v7.500H1zM4.500 4.500H12V12H4.500z" /></svg></button>
      <button aria-label="Close" className="mr-[11px]"><svg viewBox="0 0 12 12" className="w-3 h-3" stroke="#000" strokeWidth="2"><path d="M.5.5l11 11M11.500.5l-11 11" /></svg></button>
    </div>
  </header>
);

const StatusBar = () => (
  <footer className="h-[34px] shrink-0 border-t border-[#d4d4d4] flex items-center whitespace-nowrap">
    <span className="w-[89px] pl-[5px]">( 0.193 , 7.875&nbsp; )</span>
    <button aria-label="Status options" className="ml-[5px] w-[14px] h-[14px] border border-black flex items-center justify-center"><svg viewBox="0 0 5 8" className="w-[5px] h-2"><path d="M0 0v8l5-4z" /></svg></button>
    <span className="ml-[50px]">Ellipse on Layer 1</span>
    <div className="ml-auto flex items-center w-[232px]">
      <Icon><path d="M.5.5h15v12H.5z" fill="#b9d4e8" stroke={SOFT} /><path d="M2 2h12v4H2z" fill="#d98484" stroke="none" /><path d="M2 6h4v3H2z" fill="#6da36d" stroke="none" /><circle cx="8" cy="7" r="2.500" fill="#fff" stroke="#222" /><path d="M4 14.500h8" stroke="#8a8aa2" /></Icon>
      <div className="w-3" />
      <Icon><path d="M7 2l6 6-5.500 6L1 8z" fill="#fff" stroke={INK} /><path d="M2 8.500h10.500L7.500 14z" fill="#ef7d12" stroke="none" /><path d="M6 .5v5M9 4c3 0 5.500 2 5.500 8" stroke={INK} /><path d="M14 7l1 6" stroke="#ef7d12" /></Icon>
      <div className="ml-[7px] mr-[3px] w-[17px] h-[17px] bg-[#231f20] border border-[#9a9a9a]" />
      <span>C:0 M:0 Y:0 K:100</span>
    </div>
    <div className="w-[222px] h-[22px] flex items-center border-l border-[#d0d0d0] pl-[5px]">
      <Nib />
      <div className="ml-[5px] mr-1 w-[17px] h-[17px] bg-[#231f20] border border-[#9a9a9a]" />
      <span>C:0 M:0 Y:0 K:100&nbsp; 0.500 pt</span>
    </div>
  </footer>
);

const TaskButton = ({ label, open, active, children }: { label: string; open?: boolean; active?: boolean; children: React.ReactNode }) => (
  <button aria-label={label} className={clsx('relative w-12 h-10 flex items-center justify-center', active && 'bg-[#a95a20]')}>
    {children}
    {(open || active) && <span className={clsx('absolute bottom-0 h-[2px]', active ? 'w-full bg-[#ff6a00]' : 'w-10 bg-[#76b9ed]')} />}
  </button>
);

const Taskbar = () => (
  <div className="relative h-10 shrink-0 flex items-center text-white bg-[#12120c]">
    <svg viewBox="0 0 1366 40" preserveAspectRatio="none" className="absolute inset-0 w-full h-full">
      <defs>
        <linearGradient id="grass">
          <stop offset="0" stopColor="#12110c" /><stop offset=".25" stopColor="#15160c" /><stop offset=".48" stopColor="#1a200d" />
          <stop offset=".56" stopColor="#17180c" /><stop offset=".7" stopColor="#1a190e" /><stop offset="1" stopColor="#12110a" />
        </linearGradient>
      </defs>
      <path d="M0 0h1366v40H0z" fill="url(#grass)" />
      <path d="M768 0h184c-2 14-8 28-18 40H758c0-14 4-28 10-40z" fill="#060607" />
      <path d="M922 0h16v26l-3 14h-26c4-6 10-10 12-16z" fill="#26150e" />
      <path d="M0 .5h1366" stroke="#050505" />
    </svg>
    <div className="relative flex gap-px">
      <TaskButton label="Start"><svg viewBox="0 0 16 16" className="w-4 h-4" fill="#fff"><path d="M0 2.300l6.500-.9v6.100H0zM7.300 1.300L16 0v7.500H7.300zM0 8.300h6.500v6.200L0 13.600zM7.300 8.300H16V16l-8.700-1.300z" /></svg></TaskButton>
      <TaskButton label="Task view"><svg viewBox="0 0 20 14" className="w-5 h-[14px] mr-[2px]" fill="none" stroke="#fff"><path d="M4.500.5h11v13h-11zM3 2.500H.5v9H3M17 2.500h2.500v9H17" /></svg></TaskButton>
      <TaskButton label="Chrome">
        <svg viewBox="0 0 22 22" className="w-[22px] h-[22px]"><circle cx="11" cy="11" r="11" fill="#fdd23c" /><path d="M11 11L1.500 5.500A11 11 0 0120.500 5.500L21 6.500H11z" fill="#e0402f" /><path d="M11 11l4 2.500L11 22A11 11 0 011.500 5.500l5 8z" fill="#23a15a" /><circle cx="11" cy="11" r="5" fill="#fff" /><circle cx="11" cy="11" r="4" fill="#4a85ee" /></svg>
      </TaskButton>
      <TaskButton label="File Explorer" open>
        <svg viewBox="0 0 22 20" className="w-[22px] h-5"><path d="M0 1h8l1 2h13v15H0z" fill="#f5d376" /><path d="M1 1.500h5v2H1z" fill="#7fc4c0" /><path d="M1 5h20v12H1z" fill="#fce69a" /><path d="M4 11h14v8h-3.500v-4h-7v4H4z" fill="#24a9e1" /></svg>
      </TaskButton>
      <TaskButton label="Word" open>
        <svg viewBox="0 0 22 22" className="w-[22px] h-[22px]"><path d="M11 3h10.500v16H11z" fill="#fff" stroke="#2b579a" /><path d="M13 6.500h7M13 9h7M13 11.500h7M13 14h7M13 16.500h7" stroke="#2b579a" /><path d="M0 2.500L13 0v22L0 19.500z" fill="#2b579a" /><text x="1.500" y="14.500" fontSize="10" fontWeight="700" fill="#fff">W</text></svg>
      </TaskButton>
      <TaskButton label="CorelDRAW" active>
        <svg viewBox="0 0 24 24" className="w-6 h-6"><path d="M0 0h24v24H0z" fill="#5aa846" /><path d="M0 5c7 3 13 9 16 17C8 20 2 13 0 5zM0 10l12 12C6 22 1 16 0 10z" fill="#fff" /><path d="M11 1l5 11h3l4-11zM15 13h4l-1 4h-2z" fill="#b9dcae" /><path d="M16 1l1 11 2-11z" fill="#5aa846" /></svg>
      </TaskButton>
      <TaskButton label="Paint" open>
        <svg viewBox="0 0 24 24" className="w-6 h-6"><path d="M1 14C1 8 6 4 12 4s10 4 9 9-4 4-6 5 0 4-5 4-9-3-9-8z" fill="#c5e2f3" stroke="#8db7d0" /><circle cx="5.500" cy="13" r="2" fill="#e03a2e" /><circle cx="8.500" cy="8.500" r="1.800" fill="#5db548" /><circle cx="14" cy="7.500" r="1.800" fill="#f3b62d" /><circle cx="9" cy="18" r="2" fill="#2d6fd0" /><path d="M21 2L15 17l-1.500 5L13 16l5-13z" fill="#e28a38" /><path d="M18 2l4-2 1 4-3 2z" fill="#b98a64" /></svg>
      </TaskButton>
    </div>
    <div className="relative ml-auto flex items-center">
      <button aria-label="Show hidden icons"><svg viewBox="0 0 12 8" className="w-3 h-2" fill="none" stroke="#fff" strokeWidth="1.400"><path d="M.5 7L6 1.500 11.500 7" /></svg></button>
      <svg viewBox="0 0 16 10" className="w-4 h-[10px] ml-[11px]" fill="none" stroke="#fff"><path d="M.5.500h12.500v9H.5zM14.500 3v4" /><path d="M3 3h6v4H3z" fill="#fff" /></svg>
      <svg viewBox="0 0 16 16" className="w-4 h-4 ml-[7px]" fill="none" stroke="#8d8d8d" strokeWidth="1.300"><path d="M4 15C4 8 9 3 15.500 3M7 15c0-5 4-9 8.500-9M10 15c0-3 2-6 5.500-6" /><circle cx="14" cy="14" r="1.500" fill="#aaa" stroke="none" /><path d="M3 0v6M.5 1.500l5 3M5.500 1.500l-5 3" stroke="#fff" strokeWidth="1" /></svg>
      <svg viewBox="0 0 15 12" className="w-[15px] h-3 ml-2" fill="none" stroke="#fff"><path d="M.5 4h2.500l4-3.500v11L3 8H.500zM9.500 3.500l4.500 5M14 3.500l-4.500 5" /></svg>
      <button aria-label="Notifications" className="ml-[9px]"><svg viewBox="0 0 16 16" className="w-4 h-4"><path d="M0 0h16v13h-5l-2.500 3L6 13H0z" fill="#fff" /><path d="M3 3.500h10M3 6.500h10M3 9.500h6" stroke="#111" /></svg></button>
      <div className="w-[72px] ml-[3px] text-center leading-[17px] whitespace-nowrap">
        <div>7:25 PM</div>
        <div>10/22/2016</div>
      </div>
      <div className="w-px h-10 bg-[#77776f] mr-[3px]" />
    </div>
  </div>
);

export default function App() {
  return (
    <div className="h-screen flex flex-col overflow-hidden bg-[#f3f3f3] text-[11px] leading-4 text-black font-['Open_Sans','Noto_Sans',sans-serif]">
      <TitleBar />
      <nav aria-label="Menu" className="h-[21px] shrink-0 bg-[#d6d6d6] flex items-center gap-px">
        {menus.map(([before, key, after]) => (
          <button key={before + key + after} className="px-[9px]">{before}<u className="underline-offset-2">{key}</u>{after}</button>
        ))}
      </nav>
      <StandardBar />
      <PropertyBar />
      <div className="flex-1 min-h-0 flex">
        <Toolbox />
        <Workspace />
        <ColorPalette />
      </div>
      <StatusBar />
      <Taskbar />
    </div>
  );
}
